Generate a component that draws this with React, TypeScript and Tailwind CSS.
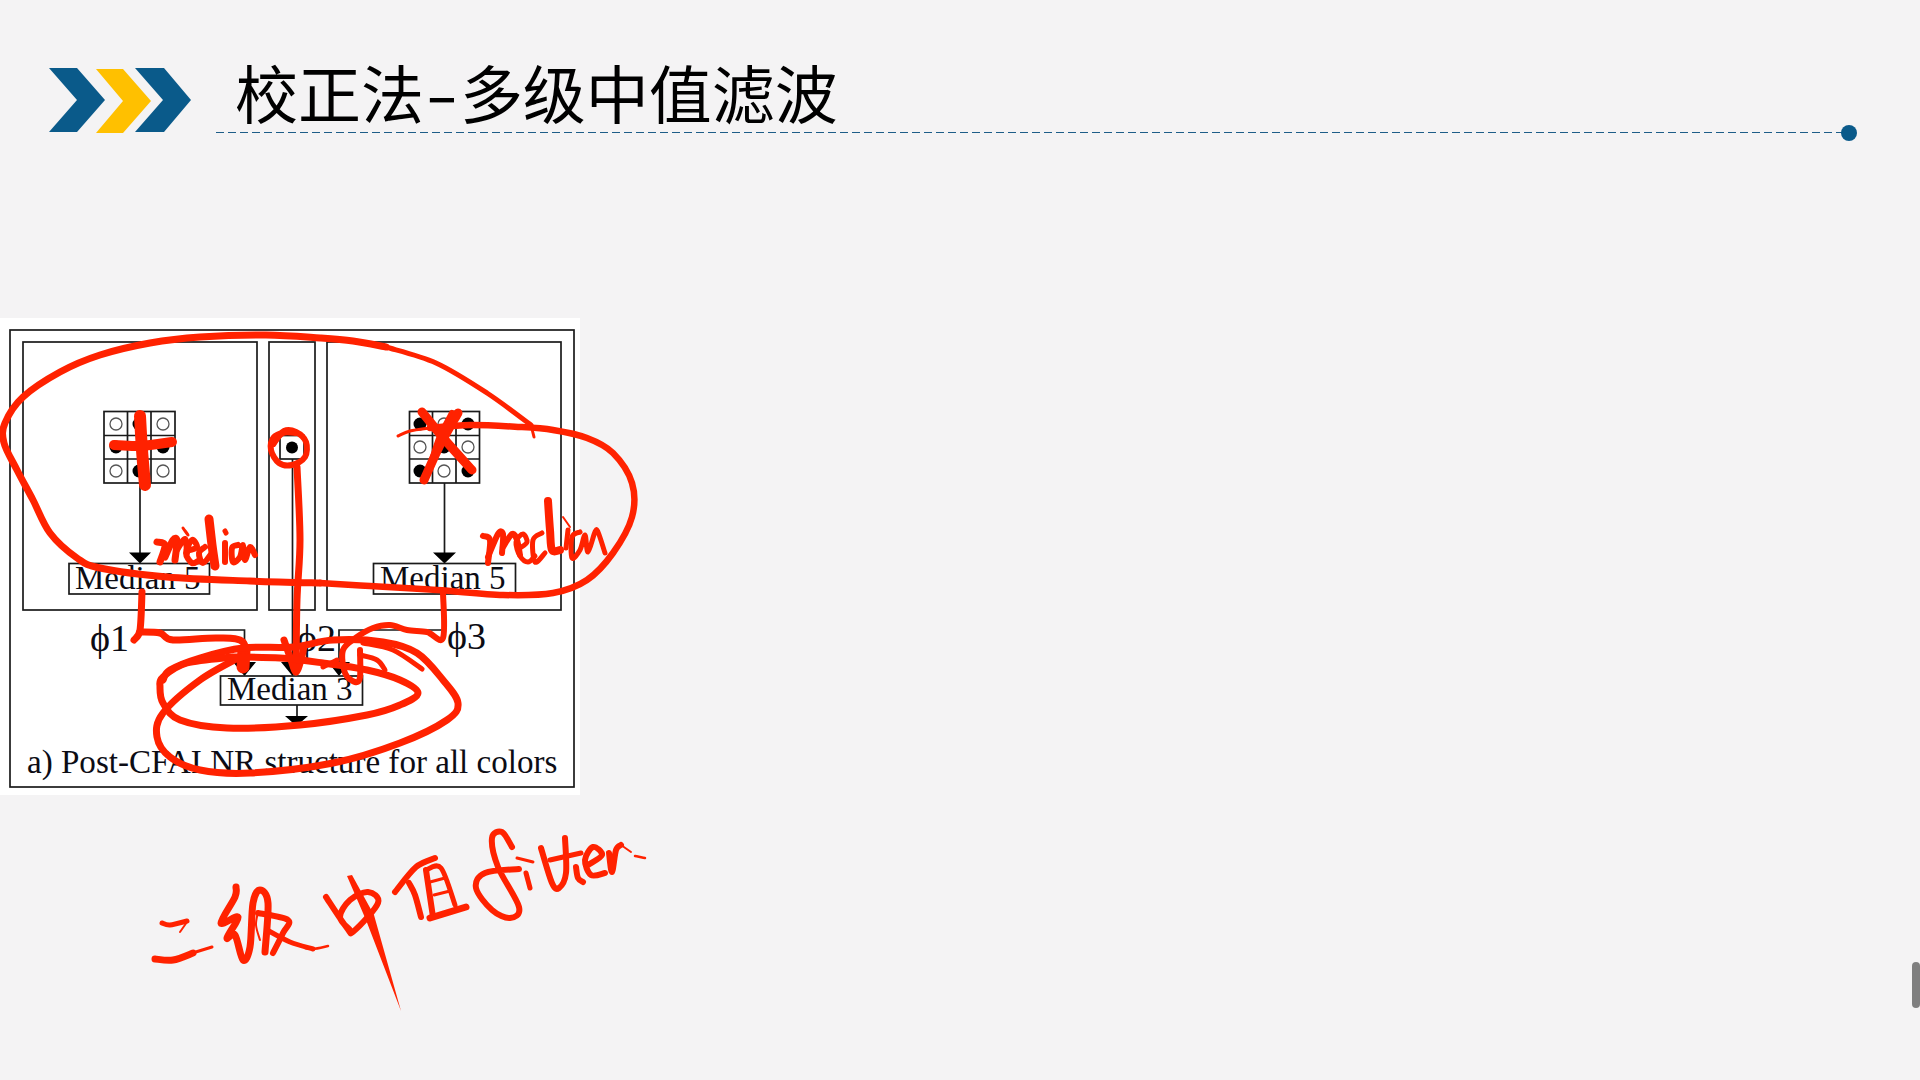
type Stroke = { w: number; pts: number[][] }

// catmull-rom through the points, good enough for pen strokes
const smooth = (pts: number[][]) => {
	let d = `M${pts[0][0]},${pts[0][1]}`
	for (let i = 0; i < pts.length - 1; i++) {
		const p0 = pts[i - 1] || pts[i]
		const p1 = pts[i]
		const p2 = pts[i + 1]
		const p3 = pts[i + 2] || p2
		const c1x = p1[0] + (p2[0] - p0[0]) / 6
		const c1y = p1[1] + (p2[1] - p0[1]) / 6
		const c2x = p2[0] - (p3[0] - p1[0]) / 6
		const c2y = p2[1] - (p3[1] - p1[1]) / 6
		d += ` C${c1x.toFixed(1)},${c1y.toFixed(1)} ${c2x.toFixed(1)},${c2y.toFixed(1)} ${p2[0]},${p2[1]}`
	}
	return d
}

const inkStrokes: Stroke[] = [
	// big loop round the two median 5 blocks
	{ w: 7, pts: [[386, 347], [353, 341], [320, 338], [266, 335], [200, 337], [150, 343], [100, 355], [60, 372], [23, 397], [5, 423], [4, 443], [17, 470], [33, 500], [50, 533], [77, 558], [100, 568], [167, 577], [250, 581], [320, 583]] },
	{ w: 5, pts: [[531, 425], [487, 393], [436, 363], [386, 347]] },
	{ w: 6.5, pts: [[320, 583], [370, 586], [437, 590], [503, 595], [553, 593], [587, 580], [613, 553], [632, 517], [632, 483], [613, 453], [587, 438], [553, 430], [520, 427], [470, 425], [430, 428]] },
	{ w: 3, pts: [[430, 428], [410, 431], [398, 436]] },
	{ w: 3, pts: [[531, 425], [534, 437]] },
	// plus on the left grid
	{ w: 12, pts: [[140, 416], [142, 450], [145, 485]] },
	{ w: 10, pts: [[114, 445], [140, 446], [172, 442]] },
	// x on the right grid
	{ w: 9, pts: [[422, 412], [445, 440], [472, 470]] },
	{ w: 9, pts: [[458, 413], [440, 445], [424, 480]] },
	{ w: 6, pts: [[452, 413], [440, 436], [432, 460]] },
	// circle on the centre pixel
	{ w: 6, pts: [[288, 431], [274, 437], [271, 450], [279, 463], [292, 465], [305, 457], [306, 442], [296, 432], [284, 431], [274, 442]] },
	{ w: 4, pts: [[274, 445], [283, 434], [296, 434]] },
	{ w: 7, pts: [[297, 467], [300, 540], [297, 600], [296, 672]] },
	{ w: 7, pts: [[284, 640], [291, 660], [296, 672], [301, 660], [304, 646]] },
	// phi1 route
	{ w: 7, pts: [[142, 592], [140, 630], [134, 640]] },
	{ w: 7, pts: [[140, 632], [160, 633], [173, 640], [217, 638], [243, 642], [245, 667]] },
	{ w: 13, pts: [[244, 650], [243, 667]] },
	// phi3 route
	{ w: 6, pts: [[443, 592], [443, 638], [427, 632], [407, 630], [390, 625], [373, 628], [357, 637], [343, 650], [345, 673], [355, 682], [360, 677], [360, 650]] },
	// median 3 outer loop
	{ w: 7, pts: [[163, 680], [170, 670], [200, 658], [243, 648], [293, 647], [333, 640], [383, 642], [417, 653], [443, 680], [458, 703], [447, 720], [400, 743], [333, 763], [250, 773], [200, 770], [170, 757], [157, 737], [163, 713], [200, 680], [240, 657]] },
	// median 3 inner loop
	{ w: 7, pts: [[233, 657], [187, 663], [163, 677], [160, 687], [163, 703], [180, 720], [227, 728], [300, 725], [367, 715], [400, 705], [418, 693], [400, 680], [367, 670], [323, 663], [280, 658], [233, 657]] },
	{ w: 5, pts: [[360, 655], [377, 660], [385, 670]] },
	{ w: 5, pts: [[363, 643], [393, 650], [422, 669]] },
	{ w: 5, pts: [[323, 667], [337, 660]] },
	// median, left
	{ w: 7, pts: [[157, 542], [165, 545], [160, 562]] },
	{ w: 7, pts: [[165, 557], [173, 540], [177, 541], [175, 560]] },
	{ w: 6, pts: [[177, 550], [185, 539], [187, 553]] },
	{ w: 6, pts: [[190, 550], [197, 547], [192, 540], [186, 553], [192, 563], [200, 560]] },
	{ w: 3, pts: [[183, 528], [188, 535]] },
	{ w: 6, pts: [[205, 547], [199, 553], [203, 563], [212, 553]] },
	{ w: 9, pts: [[209, 519], [212, 545], [215, 566]] },
	{ w: 6, pts: [[225, 543], [225, 562]] },
	{ w: 5, pts: [[225, 531], [226, 533]] },
	{ w: 6, pts: [[238, 545], [232, 548], [233, 562], [240, 557], [243, 545], [245, 560], [250, 547], [255, 555]] },
	// median, right
	{ w: 6, pts: [[483, 536], [490, 540], [488, 563]] },
	{ w: 6, pts: [[488, 557], [498, 534], [503, 534], [502, 553]] },
	{ w: 6, pts: [[503, 547], [512, 534], [517, 540], [520, 555]] },
	{ w: 5, pts: [[520, 548], [527, 542], [523, 534], [516, 542], [520, 556], [528, 562], [535, 556]] },
	{ w: 5, pts: [[542, 533], [533, 540], [535, 562], [545, 553]] },
	{ w: 8, pts: [[548, 501], [550, 530], [552, 550], [560, 550]] },
	{ w: 2, pts: [[563, 517], [570, 527]] },
	{ w: 5, pts: [[568, 530], [566, 548]] },
	{ w: 5, pts: [[580, 532], [572, 537], [572, 558], [580, 550], [585, 535], [588, 552], [595, 532], [598, 532], [605, 553]] },
	// 二
	{ w: 5, pts: [[162, 923], [170, 925], [187, 921]] },
	{ w: 2, pts: [[187, 922], [180, 932]] },
	{ w: 7, pts: [[155, 959], [173, 960], [193, 953]] },
	{ w: 3, pts: [[186, 955], [212, 947]] },
	// 级
	{ w: 7, pts: [[236, 887], [235, 897], [221, 923], [238, 917], [227, 938], [235, 935], [243, 960], [250, 947], [253, 903], [260, 890], [268, 903], [265, 952]] },
	{ w: 2, pts: [[258, 912], [256, 925], [260, 940]] },
	{ w: 6, pts: [[258, 913], [288, 920], [283, 933], [273, 953]] },
	{ w: 5, pts: [[267, 930], [290, 942], [313, 949]] },
	{ w: 2.5, pts: [[305, 948], [313, 949], [328, 946]] },
	// 中
	{ w: 6, pts: [[326, 897], [347, 928], [354, 931], [378, 903], [368, 892], [350, 900], [340, 917], [350, 930]] },
	// 值
	{ w: 6, pts: [[435, 858], [416, 867], [395, 892]] },
	{ w: 6, pts: [[409, 883], [415, 895], [421, 917]] },
	{ w: 6, pts: [[426, 870], [433, 917]] },
	{ w: 5, pts: [[426, 870], [441, 868], [455, 905]] },
	{ w: 3, pts: [[430, 882], [445, 878]] },
	{ w: 3, pts: [[434, 895], [450, 891]] },
	{ w: 7, pts: [[430, 918], [466, 907]] },
	// filter
	{ w: 6, pts: [[512, 847], [502, 832], [492, 838], [498, 867], [519, 907], [510, 918], [492, 910], [476, 888], [485, 873], [519, 869]] },
	{ w: 3, pts: [[517, 858], [533, 862]] },
	{ w: 5, pts: [[526, 873], [530, 888]] },
	{ w: 6, pts: [[541, 848], [552, 883], [559, 888], [566, 873], [565, 838]] },
	{ w: 5, pts: [[550, 860], [581, 853]] },
	{ w: 6, pts: [[576, 867], [578, 878], [583, 882]] },
	{ w: 6, pts: [[588, 865], [602, 855], [593, 847], [585, 860], [591, 875], [605, 873]] },
	{ w: 6, pts: [[609, 853], [612, 872], [616, 850], [621, 845]] },
	{ w: 2, pts: [[621, 845], [631, 852]] },
	{ w: 2.5, pts: [[635, 856], [645, 858]] },
]

const circles = [
	[116, 423, 0], [139, 423, 1], [163, 423, 0],
	[116, 446, 1], [163, 446, 1],
	[116, 470, 0], [139, 470, 1], [163, 470, 0],
	[420, 423, 1], [444, 423, 0], [468, 423, 1],
	[420, 446, 0], [444, 446, 1], [468, 446, 0],
	[420, 470, 1], [444, 470, 0], [468, 470, 1],
]

const Figure = () => (
	<svg width="580" height="477" viewBox="0 317 580 477" className="block font-['Liberation_Serif',serif]" fill="none" stroke="#1a1a1a" strokeWidth="1.7">
		<rect x="10" y="329" width="564" height="457" />
		<rect x="23" y="341" width="234" height="268" />
		<rect x="269" y="341" width="46" height="268" />
		<rect x="327" y="341" width="234" height="268" />

		<rect x="104" y="410.5" width="71" height="71.5" />
		<path d="M127.5 410.5V482M151 410.5V482M104 434.5H175M104 458H175" />
		<rect x="409.5" y="410.5" width="70" height="71.5" />
		<path d="M432.5 410.5V482M456 410.5V482M409.5 434.5H479.5M409.5 458H479.5" />
		<rect x="280" y="434.5" width="24" height="23.5" />
		<circle cx="292" cy="446.5" r="6" fill="#000" stroke="none" />
		{circles.map(([cx, cy, solid], i) => (
			<circle key={i} cx={cx} cy={cy} r={solid ? 6.5 : 6} fill={solid ? '#000' : 'none'} stroke={solid ? 'none' : '#555'} strokeWidth="1.3" />
		))}

		<path d="M140 482V552M444.5 482V552M292.5 458V662M140 593V629H244.5V662M444.5 593V629H339V662M297 704V716" />
		<path d="M129 551.5H151L140 562.5ZM433 551.5H456L444.5 562.5ZM233 661H256L244.5 675ZM281 661H304L292.5 675ZM328 661H350L339 675ZM285 715H308L296.5 725Z" fill="#000" stroke="none" />

		<rect x="69" y="562.5" width="140.5" height="30.5" />
		<rect x="373.5" y="562.5" width="142" height="30.5" />
		<rect x="220.5" y="675" width="142" height="29" />

		<g fill="#0c0c14" stroke="none">
			<text x="75" y="588" fontSize="33">Median 5</text>
			<text x="380" y="588" fontSize="33">Median 5</text>
			<text x="227" y="699" fontSize="33">Median 3</text>
			<text x="90" y="650" fontSize="38">ϕ1</text>
			<text x="297" y="650" fontSize="38">ϕ2</text>
			<text x="447" y="648" fontSize="38">ϕ3</text>
			<text x="27" y="772" fontSize="33.1">a) Post-CFAI NR structure for all colors</text>
		</g>
	</svg>
)

const App = () => {
	return (
		<div className="relative w-[1920px] h-[1080px] overflow-hidden bg-[#f4f3f4] font-['Noto_Sans_CJK_SC',sans-serif]">
			<header className="flex items-end pl-[49px] pt-[67px] pr-[71px]">
				<svg width="142" height="66" viewBox="49 67 142 66" className="shrink-0">
					<path d="M49 68H77L105 100L77 132H49L77 100Z" fill="#0a5a8a" />
					<path d="M96 69H123L151 101L123 133H96L123 101Z" fill="#ffc000" />
					<path d="M135 68H164L191 100L164 132H135L163 100Z" fill="#0a5a8a" />
				</svg>
				<div className="flex-1 ml-[25px] relative">
					<h1 className="pl-[19px] h-[65px] text-[63px] leading-[47px] font-normal text-black whitespace-nowrap">
						校正法<span className="inline-block scale-x-150 px-[7px]">-</span>多级中值滤波
					</h1>
					<div className="h-px bg-[repeating-linear-gradient(90deg,#1d5d88_0_8px,transparent_8px_12px)]"></div>
					<div className="absolute right-[-8px] bottom-[-8px] w-4 h-4 rounded-full bg-[#0a5a8a]"></div>
				</div>
			</header>

			<section className="mt-[185px] w-[580px] bg-white">
				<Figure />
			</section>

			{/* pen annotations sit over everything, on the whole slide */}
			<svg width="1920" height="1080" className="absolute inset-0 pointer-events-none" fill="none" stroke="#ff2200" strokeLinecap="round" strokeLinejoin="round">
				{inkStrokes.map((s, i) => (
					<path key={i} d={smooth(s.pts)} strokeWidth={s.w} />
				))}
				<path d="M347 876L352 875L374 915L401 1011L366 920Z" fill="#ff2200" stroke="none" />
			</svg>

			<div className="absolute right-0 top-[962px] w-2 h-[46px] rounded-full bg-[#7f7f7f]"></div>
		</div>
	)
}

export default App
